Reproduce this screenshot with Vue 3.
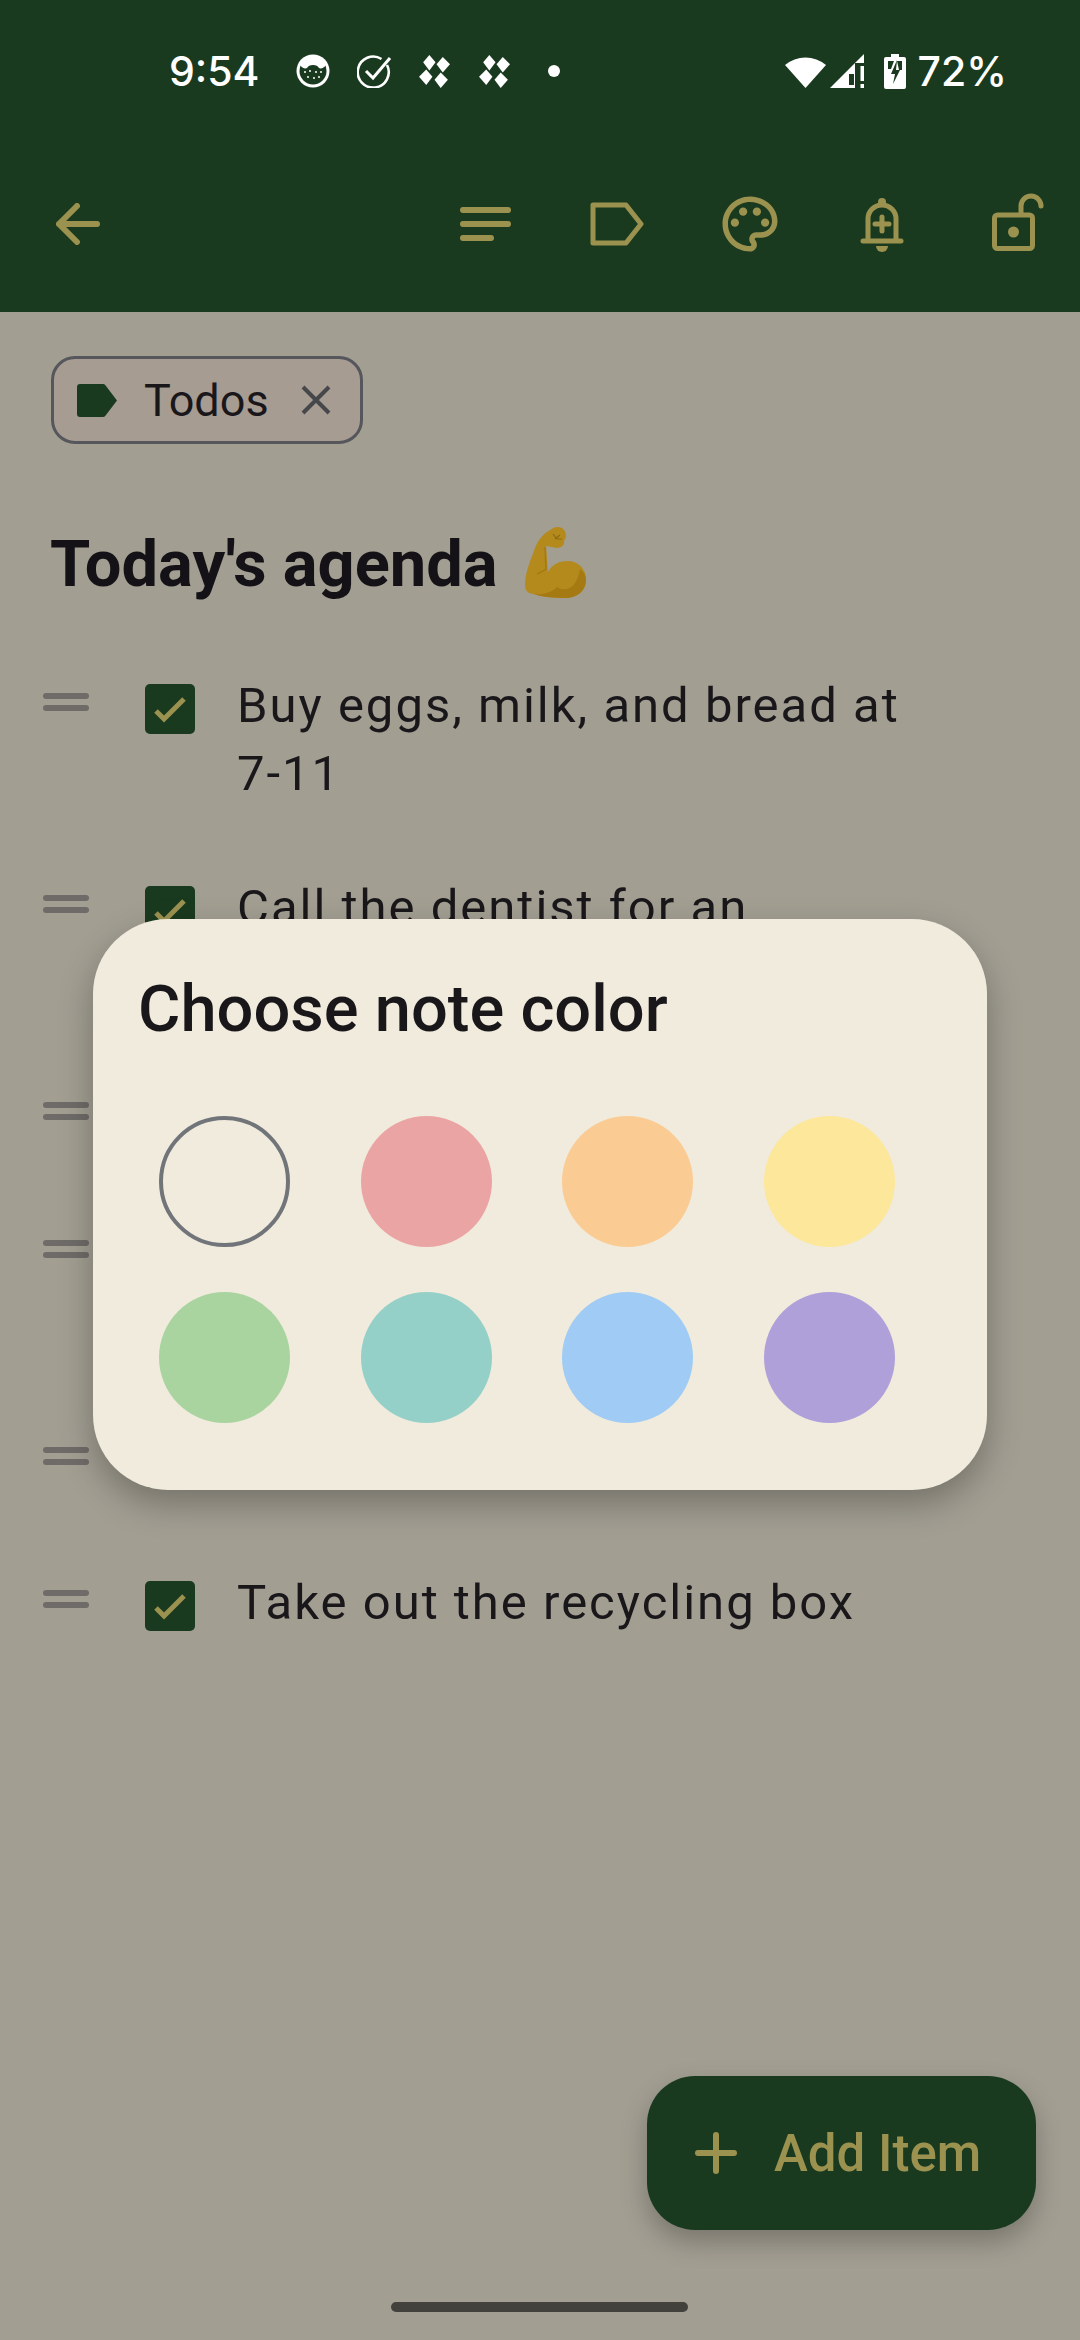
<template>
  <div class="screen">
    <header class="header">
      <div class="status">
        <span class="clock">9:54</span>
        <svg class="st st-coin" width="34" height="34" viewBox="0 0 34 34">
          <circle cx="17" cy="17" r="16.5" fill="#fff" />
          <circle cx="17" cy="17" r="13.5" fill="#1a3a1f" />
          <path d="M4 11a14 14 0 0 1 26 0c-2 3-5 4-7 3-1-2-3-3-6-3s-5 1-6 3c-2 1-5 0-7-3z" fill="#fff" />
          <g fill="#fff">
            <circle cx="9" cy="18" r="1" />
            <circle cx="14" cy="17" r="1" />
            <circle cx="20" cy="18" r="1" />
            <circle cx="25" cy="18" r="1" />
            <circle cx="12" cy="23" r="1" />
            <circle cx="18" cy="24" r="1" />
            <circle cx="23" cy="23" r="1" />
          </g>
        </svg>
        <svg class="st st-check" width="36" height="34" viewBox="0 0 36 34" fill="none" stroke="#fff">
          <path d="M30 11a15.500 15.500 0 1 1-5.500-6" stroke-width="2.600" />
          <path d="M9 17l7 7L33 4" stroke-width="3" />
        </svg>
        <svg class="st st-dia" width="33" height="33" viewBox="2 1 30 32" fill="#fff">
          <path v-for="d in diamonds" :key="d" :d="d" />
        </svg>
        <svg class="st st-dia2" width="33" height="33" viewBox="2 1 30 32" fill="#fff">
          <path v-for="d in diamonds" :key="d" :d="d" />
        </svg>
        <span class="dot"></span>
        <span class="spacer"></span>
        <svg width="41" height="34" viewBox="0 0 41 34">
          <path d="M0 11A32 32 0 0 1 41 11L20.500 34Z" fill="#fff" />
        </svg>
        <svg class="st-signal" width="35" height="34" viewBox="0 0 35 34" fill="#fff">
          <path fill-rule="evenodd" d="M0 34L34 0V9H25V34ZM19 20H24V31H10H19Z" />
          <rect x="30.500" y="12" width="3.500" height="15" />
          <rect x="30.500" y="30" width="3.500" height="4" />
        </svg>
        <svg class="st-batt" width="22" height="35" viewBox="0 0 22 35">
          <path d="M7 0h8v3h5a2 2 0 0 1 2 2v28a2 2 0 0 1-2 2H2a2 2 0 0 1-2-2V5a2 2 0 0 1 2-2h5z" fill="#fff" />
          <path d="M4 7h6l-3 8H4zM13 7h5v9h-3z" fill="#1a3a1f" />
          <path d="M13 6L7 20h4l-2 10 7-14h-4z" fill="#1a3a1f" />
        </svg>
        <span class="pct">72%</span>
      </div>
      <div class="toolbar">
        <svg class="tb-back" width="45" height="42" viewBox="0 0 45 42" fill="none" stroke="#9c9250" stroke-width="6" stroke-linecap="round" stroke-linejoin="round">
          <path d="M42 21H4M22 3L4 21l18 18" />
        </svg>
        <span class="spacer"></span>
        <svg class="tb-lines" width="51" height="34" viewBox="0 0 51 34" fill="none" stroke="#9c9250" stroke-width="6" stroke-linecap="round">
          <path d="M3 3h45M3 17h45M3 31h28" />
        </svg>
        <svg class="tb-label" width="54" height="44" viewBox="0 0 54 44" fill="none" stroke="#9c9250" stroke-width="5" stroke-linejoin="round">
          <path d="M3 3h33l15 19-15 19H3z" />
        </svg>
        <svg class="tb-palette" width="66" height="66" viewBox="0 0 24 24" fill="#9c9250">
          <path d="M12 22C6.490 22 2 17.510 2 12S6.490 2 12 2s10 4.040 10 9c0 3.310-2.690 6-6 6h-1.770c-.280 0-.500.220-.500.500 0 .120.050.230.130.330.410.470.640 1.060.640 1.670 0 1.380-1.120 2.500-2.500 2.500zm0-18c-4.410 0-8 3.590-8 8s3.590 8 8 8c.280 0 .500-.220.500-.500 0-.160-.080-.280-.140-.350-.410-.460-.630-1.050-.630-1.650 0-1.380 1.120-2.500 2.500-2.500H16c2.210 0 4-1.790 4-4 0-3.860-3.590-7-8-7z" />
          <circle cx="6.500" cy="11.500" r="1.500" />
          <circle cx="9.500" cy="7.500" r="1.500" />
          <circle cx="14.500" cy="7.500" r="1.500" />
          <circle cx="17.500" cy="11.500" r="1.500" />
        </svg>
        <svg class="tb-bell" width="44" height="55" viewBox="0 0 44 55" fill="none" stroke="#9c9250" stroke-width="5" stroke-linecap="round">
          <path d="M8 44V22a14 14 0 0 1 28 0v22M3 44h38M22 20v14M15 27h14" />
          <circle cx="22" cy="5" r="4" fill="#9c9250" stroke="none" />
          <path d="M16 49h12a6 6 0 0 1-12 0z" fill="#9c9250" stroke="none" />
        </svg>
        <svg class="tb-lock" width="52" height="58" viewBox="0 0 52 58" fill="none" stroke="#9c9250" stroke-width="5" stroke-linecap="round">
          <rect x="2.500" y="22" width="38" height="33.500" rx="3" />
          <path d="M29 20v-7a10 10 0 0 1 20 0" />
          <circle cx="21.500" cy="39" r="5.500" fill="#9c9250" stroke="none" />
        </svg>
      </div>
    </header>

    <main class="content">
      <div class="chip">
        <svg width="40" height="33" viewBox="0 0 40 33">
          <path d="M3 0h23a3 3 0 0 1 2.400 1.200L40 16.500 28.400 31.800A3 3 0 0 1 26 33H3a3 3 0 0 1-3-3V3a3 3 0 0 1 3-3z" fill="#1a3a1f" />
        </svg>
        <span class="chip-text">Todos</span>
        <svg width="30" height="30" viewBox="0 0 30 30" fill="none" stroke="#45474b" stroke-width="4">
          <path d="M2 2l26 26M28 2L2 28" />
        </svg>
      </div>

      <h1 class="title">
        <span>Today's agenda</span>
        <svg class="muscle" width="62" height="71" viewBox="0 0 62 71">
          <path d="M33 0C38 0 41 4 41 9C41 11 40 12 39 14C40 18 36 21 32 21L21 19C22 28 22 38 23 45C27 37 35 34 43 34C53 34 61 42 61 52C61 64 52 71 40 71C30 71 18 70 8 67C2 66 0 63 0 58C0 48 4 36 9 24C12 15 16 9 22 5C26 2 29 0 33 0Z" fill="#b48a1c" />
          <path d="M32 60C42 66 52 60 55 42C60 46 61 50 61 53C61 64 52 71 40 71C30 71 18 70 8 67C18 68 26 66 32 60Z" fill="#a67a12" />
          <path d="M12 47C16 45 19 44 21 42L20 20" fill="none" stroke="#a67a12" stroke-width="1.500" />
          <path d="M30 12l5-4M28 7l4 5 5 0" fill="none" stroke="#8f6a10" stroke-width="1.200" />
        </svg>
      </h1>

      <ul class="list">
        <li v-for="(item, i) in items" :key="i" class="row" :style="{ height: item.h + 'px' }">
          <span class="handle"><i></i><i></i></span>
          <span class="box">
            <svg width="50" height="50" viewBox="0 0 50 50" fill="none" stroke="#9c9250" stroke-width="5">
              <path d="M11 27l8 8L39 15" />
            </svg>
          </span>
          <span class="row-text">{{ item.text }}</span>
        </li>
      </ul>
    </main>

    <section class="dialog">
      <h2 class="dialog-title">Choose note color</h2>
      <div class="swatches">
        <span v-for="c in colors" :key="c" class="swatch" :class="{ picked: c === 'none' }" :style="c === 'none' ? null : { background: c }"></span>
      </div>
    </section>

    <button class="fab">
      <svg width="42" height="42" viewBox="0 0 42 42" fill="none" stroke="#9c9250" stroke-width="6" stroke-linecap="round">
        <path d="M21 3v36M3 21h36" />
      </svg>
      <span>Add Item</span>
    </button>

    <div class="home-bar"></div>
  </div>
</template>

<script setup>
const diamonds = [
  'M12 1l6 7-6 8-6-8z',
  'M25 3l7 7-7 8-6-8z',
  'M9 15l6 7-6 8-7-8z',
  'M23 18l7 7-7 8-6-8z'
]

const items = [
  { text: 'Buy eggs, milk, and bread at 7-11', h: 202 },
  { text: 'Call the dentist for an', h: 207 },
  { text: '', h: 138 },
  { text: '', h: 207 },
  { text: '', h: 143 },
  { text: 'Take out the recycling box', h: 140 }
]

const colors = ['none', '#eba4a4', '#fbcb94', '#fce79b', '#a9d4a0', '#95d0c8', '#9fcbf5', '#b0a0da']
</script>

<style scoped>
.screen {
  position: relative;
  height: 2340px;
  overflow: hidden;
  background: #a29e92;
  font-family: Roboto, sans-serif;
  color: #1a171b;
}

.header {
  height: 312px;
  background: #1a3a1f;
}

.status {
  display: flex;
  align-items: center;
  height: 48px;
  padding: 47px 73px 0 169px;
  color: #fff;
  font-family: Inter, sans-serif;
  font-size: 41px;
  font-weight: 500;
}

.clock {
  width: 127px;
}

.st-check {
  margin-left: 27px;
}

.st-dia {
  margin-left: 25px;
}

.st-dia2 {
  margin-left: 27px;
}

.dot {
  width: 12px;
  height: 12px;
  margin-left: 37px;
  border-radius: 50%;
  background: #fff;
}

.spacer {
  flex: 1;
}

.st-signal {
  margin-left: 4px;
}

.st-batt {
  margin-left: 19px;
}

.pct {
  margin-left: 12px;
}

.toolbar {
  display: flex;
  align-items: center;
  height: 80px;
  margin-top: 89px;
  padding: 0 36px 0 55px;
}

.tb-label {
  margin-left: 79px;
}

.tb-palette {
  margin-left: 73px;
}

.tb-bell {
  margin-left: 77px;
}

.tb-lock {
  margin-left: 88px;
  margin-top: -4px;
}

.content {
  padding: 44px 0 0 51px;
}

.chip {
  display: inline-flex;
  align-items: center;
  box-sizing: border-box;
  width: 312px;
  height: 88px;
  padding-left: 23px;
  border: 3px solid #55575c;
  border-radius: 24px;
  background: #a69c92;
}

.chip-text {
  width: 157px;
  margin-left: 27px;
  font-size: 45px;
}

.title {
  display: flex;
  align-items: flex-start;
  margin: 0 0 0 -1px;
  padding-top: 81px;
  font-size: 65px;
  font-weight: 700;
  line-height: 78px;
  color: #141217;
}

.muscle {
  margin-left: 27px;
  margin-top: 2px;
}

.list {
  margin: 70px 0 0;
  padding: 0;
  list-style: none;
}

.row {
  display: flex;
  align-items: flex-start;
  margin-left: -8px;
}

.handle {
  display: flex;
  flex-direction: column;
  gap: 6px;
  width: 46px;
  margin-top: 20px;
}

.handle i {
  display: block;
  height: 6px;
  border-radius: 3px;
  background: #6f6b68;
}

.box {
  width: 50px;
  height: 50px;
  margin: 11px 0 0 56px;
  border-radius: 5px;
  background: #1a3a1f;
}

.box svg {
  display: block;
}

.row-text {
  width: 680px;
  margin: -1px 0 0 42px;
  font-size: 49px;
  line-height: 68px;
  letter-spacing: 2px;
}

.dialog {
  position: absolute;
  left: 93px;
  top: 919px;
  box-sizing: border-box;
  width: 894px;
  height: 571px;
  padding: 54px 0 0 66px;
  border-radius: 75px;
  background: #f0ebdc;
  box-shadow: 0 14px 34px rgba(0, 0, 0, 0.28);
}

.dialog-title {
  margin: 0 0 0 -21px;
  font-size: 65px;
  font-weight: 500;
  line-height: 72px;
}

.swatches {
  display: grid;
  grid-template-columns: repeat(4, 131px);
  column-gap: 70.5px;
  row-gap: 45px;
  margin-top: 71px;
}

.swatch {
  box-sizing: border-box;
  width: 131px;
  height: 131px;
  border-radius: 50%;
}

.picked {
  border: 4px solid #71757a;
}

.fab {
  position: absolute;
  left: 647px;
  top: 2076px;
  display: flex;
  align-items: center;
  gap: 37px;
  box-sizing: border-box;
  width: 389px;
  height: 154px;
  padding: 0 0 0 48px;
  border: 0;
  border-radius: 48px;
  background: #1a3a1f;
  box-shadow: 0 12px 26px rgba(0, 0, 0, 0.25);
  font-family: Roboto, sans-serif;
  font-size: 51px;
  font-weight: 500;
  color: #9c9250;
}

.home-bar {
  position: absolute;
  left: 391px;
  top: 2302px;
  width: 297px;
  height: 10px;
  border-radius: 5px;
  background: #43413c;
}
</style>

<style>
body {
  background: #a29e92;
}
</style>
